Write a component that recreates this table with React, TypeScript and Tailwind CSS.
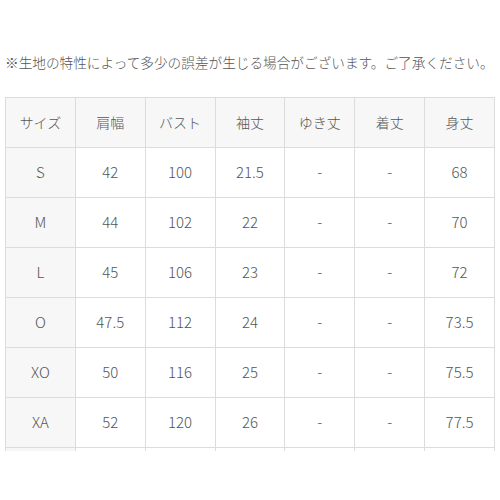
import React from 'react';

const headers = ['サイズ', '肩幅', 'バスト', '袖丈', 'ゆき丈', '着丈', '身丈'];

const rows: string[][] = [
  ['S', '42', '100', '21.5', '-', '-', '68'],
  ['M', '44', '102', '22', '-', '-', '70'],
  ['L', '45', '106', '23', '-', '-', '72'],
  ['O', '47.5', '112', '24', '-', '-', '73.5'],
  ['XO', '50', '116', '25', '-', '-', '75.5'],
  ['XA', '52', '120', '26', '-', '-', '77.5'],
  ['', '', '', '', '', '', ''],
];

export default function App() {
  return (
    <div
      className="w-[500px] h-[500px] bg-white text-[#555] font-light overflow-hidden"
      style={{ fontFamily: '"Noto Sans CJK JP", "Noto Sans", sans-serif' }}
    >
      <p className="pt-[52px] pl-[5px] text-[13.65px] leading-[20px] whitespace-nowrap">
        ※生地の特性によって多少の誤差が生じる場合がございます。ご了承ください。
      </p>

      {/* サイズ表（下端は切れている） */}
      <div className="mt-[25px] ml-[5px] w-[490px] h-[354px] overflow-hidden">
        <table className="w-[490px] border-collapse table-fixed text-[15px]">
          <thead>
            <tr className="h-[50px] bg-[#f7f7f7]">
              {headers.map((h) => (
                <th key={h} className="border border-[#dcdcdc] font-light text-[14px] text-center">
                  {h}
                </th>
              ))}
            </tr>
          </thead>
          <tbody>
            {rows.map((r, i) => (
              <tr key={i} className="h-[50px]">
                {r.map((c, j) => (
                  <td
                    key={j}
                    className={
                      j === 0
                        ? 'border border-[#dcdcdc] bg-[#f7f7f7] text-center'
                        : 'border border-[#dcdcdc] text-center'
                    }
                  >
                    {c}
                  </td>
                ))}
              </tr>
            ))}
          </tbody>
        </table>
      </div>
    </div>
  );
}
